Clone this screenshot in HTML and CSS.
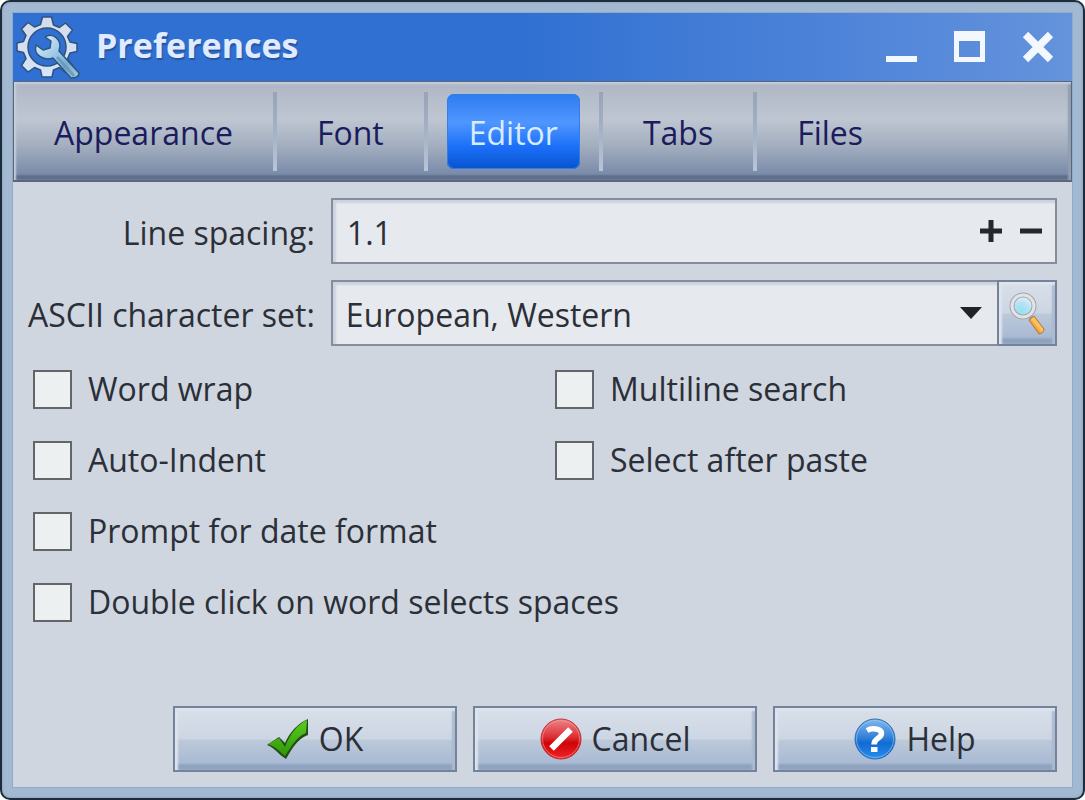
FILE: index.html
```html
<!DOCTYPE html>
<html lang="en">
<head>
<meta charset="utf-8">
<meta name="viewport" content="width=device-width, initial-scale=1">
<title>Preferences</title>
<link rel="stylesheet" href="styles.css">
</head>
<body>
<main class="window">
  <div class="window-inner">
    <header class="titlebar">
      <svg class="app-icon" viewBox="0 0 64 64" aria-hidden="true">
        <defs>
          <linearGradient id="gearFill" x1="0" y1="0" x2="0" y2="1"><stop offset="0" stop-color="#d3dcea"/><stop offset="1" stop-color="#d5e4f8"/></linearGradient>
          <linearGradient id="wrenchFill" x1="0" y1="0" x2="1" y2="1"><stop offset="0" stop-color="#e4f3fb"/><stop offset=".4" stop-color="#a3cdec"/><stop offset=".7" stop-color="#78acd0"/><stop offset="1" stop-color="#a4cde0"/></linearGradient>
        </defs>
        <path d="M26.500 2h9l2 8 6 2.500 6-4.500 7 7-5 6.500 2.500 5.500 7 1.500v8l-7 1.500-2.500 6 5 6.500-7 7-6-5-6 2.500-1.500 7h-10l-1.500-7-6-2.500-6.500 4.500-6.500-6.500 4.500-7-2.500-6-6.500-1.500v-8l6.500-1.500 2.500-6-4.500-6.500 6.500-6.500 6.500 4.500 6-2.500z" fill="url(#gearFill)" stroke="#2f517f" stroke-width="1.500" stroke-linejoin="round"/>
        <circle cx="31" cy="32" r="19" fill="#3070d2" stroke="#2f517f" stroke-width="1.500"/>
        <path d="M29 22C36 17 47 24 43 36L63 58q0 5-8 5L37 43C29 46 17 41 20 30l7 5 7-2 1-7z" fill="url(#wrenchFill)" stroke="#31557d" stroke-width="1.500" stroke-linejoin="round"/>
        <path d="M41 42l17 19" stroke="#5e92b6" stroke-width="3" opacity=".7"/>
      </svg>
      <h1 class="title">Preferences</h1>
      <div class="window-controls">
        <button class="window-button" type="button" aria-label="Minimize"><svg viewBox="0 0 32 32"><path d="M0 25h31v6H0z" fill="#f3f8ff"/></svg></button>
        <button class="window-button" type="button" aria-label="Maximize"><svg viewBox="0 0 32 32"><path d="M0 0h31v31H0zM5 10v16h21V10z" fill="#f3f8ff" fill-rule="evenodd"/></svg></button>
        <button class="window-button" type="button" aria-label="Close"><svg viewBox="0 0 32 32"><path d="M3.500 3.500l25 25M28.500 3.500l-25 25" stroke="#f3f8ff" stroke-width="7.500"/></svg></button>
      </div>
    </header>
    <nav class="tabs" aria-label="Preference pages">
      <div class="tab"><button class="tab-button" type="button">Appearance</button></div>
      <div class="tab"><button class="tab-button" type="button">Font</button></div>
      <div class="tab"><button class="tab-button tab-button-active" type="button" aria-current="page">Editor</button></div>
      <div class="tab"><button class="tab-button" type="button">Tabs</button></div>
      <div class="tab"><button class="tab-button" type="button">Files</button></div>
    </nav>
    <form class="page">
      <div class="fields">
        <label class="field-label" for="spacing">Line spacing:</label>
        <div class="field">
          <input class="field-input" id="spacing" type="text" value="1.1">
          <div class="stepper">
            <button class="step" type="button" aria-label="Increase"><svg viewBox="0 0 24 24"><path d="M12 1v22M1 12h22" stroke="#23272e" stroke-width="5"/></svg></button>
            <button class="step" type="button" aria-label="Decrease"><svg viewBox="0 0 24 24"><path d="M1 12h22" stroke="#23272e" stroke-width="5"/></svg></button>
          </div>
        </div>
        <label class="field-label" for="charset">ASCII character set:</label>
        <div class="field-group">
          <div class="field field-select">
            <select class="select" id="charset"><option>European, Western</option></select>
            <svg class="arrow" viewBox="0 0 22 12" aria-hidden="true"><path d="M0 0h22L11 12z" fill="#1e2229"/></svg>
          </div>
          <button class="bevel search" type="button" aria-label="Search">
            <svg class="search-icon" viewBox="0 0 40 44">
              <defs>
                <radialGradient id="lens" cx=".4" cy=".75" r=".8"><stop offset="0" stop-color="#8fe4f2"/><stop offset=".5" stop-color="#b9e1f3"/><stop offset="1" stop-color="#f4fbff"/></radialGradient>
                <linearGradient id="handle" x1="0" y1="1" x2="1" y2="0"><stop offset="0" stop-color="#d9781a"/><stop offset=".4" stop-color="#f0a040"/><stop offset=".55" stop-color="#ffc96a"/><stop offset="1" stop-color="#c66e13"/></linearGradient>
              </defs>
              <path d="M22 24l4 5" stroke="#999ea7" stroke-width="4"/>
              <path d="M22 29l5-4 10 13q0 4-5 5z" fill="url(#handle)" stroke="#b8772d"/>
              <circle cx="16" cy="15" r="11" fill="url(#lens)" stroke="#a2a5ac" stroke-width="5"/>
              <circle cx="16" cy="15" r="11" fill="none" stroke="#e1e3e6" stroke-width="3"/>
            </svg>
          </button>
        </div>
      </div>
      <div class="checks">
        <label class="check"><input class="check-box" type="checkbox">Word wrap</label>
        <label class="check"><input class="check-box" type="checkbox">Multiline search</label>
        <label class="check"><input class="check-box" type="checkbox">Auto-Indent</label>
        <label class="check"><input class="check-box" type="checkbox">Select after paste</label>
        <label class="check check-wide"><input class="check-box" type="checkbox">Prompt for date format</label>
        <label class="check check-wide"><input class="check-box" type="checkbox">Double click on word selects spaces</label>
      </div>
      <div class="actions">
        <button class="bevel action" type="button">
          <svg class="action-icon" viewBox="0 0 42 42" aria-hidden="true">
            <defs><linearGradient id="green" x1="0" y1="0" x2="0" y2="1"><stop offset="0" stop-color="#59cc20"/><stop offset="1" stop-color="#30960b"/></linearGradient></defs>
            <path d="M0 27l12-8 6 6C23 14 30 6 41 1v16C30 21 25 31 19 41 11 36 8 30 0 27z" fill="#234e16"/>
            <path d="M1 26l11-6 6 9C23 16 30 7 40 2l-1 13C29 19 24 29 18 38 12 33 9 29 1 26z" fill="url(#green)"/>
          </svg>
          OK
        </button>
        <button class="bevel action" type="button">
          <svg class="action-icon" viewBox="0 0 42 42" aria-hidden="true">
            <defs><linearGradient id="red" x1="0" y1="0" x2="0" y2="1"><stop offset="0" stop-color="#ee8586"/><stop offset=".45" stop-color="#db3035"/><stop offset=".6" stop-color="#cf0207"/><stop offset="1" stop-color="#ee2529"/></linearGradient></defs>
            <circle cx="21" cy="21" r="20" fill="url(#red)" stroke="#c83036"/>
            <circle cx="21" cy="21" r="18.500" fill="none" stroke="#f5a0a0" stroke-width="1" opacity=".6"/>
            <path d="M11.500 30.500l19-19" stroke="#fff" stroke-width="6.500"/>
          </svg>
          Cancel
        </button>
        <button class="bevel action" type="button">
          <svg class="action-icon" viewBox="0 0 42 42" aria-hidden="true">
            <defs><linearGradient id="blue" x1="0" y1="0" x2="0" y2="1"><stop offset="0" stop-color="#83b7ec"/><stop offset=".45" stop-color="#3483d8"/><stop offset=".6" stop-color="#116bd3"/><stop offset="1" stop-color="#298eed"/></linearGradient></defs>
            <circle cx="21" cy="21" r="20" fill="url(#blue)" stroke="#346eb1"/>
            <circle cx="21" cy="21" r="18.500" fill="none" stroke="#9dcbf5" stroke-width="1" opacity=".6"/>
            <path d="M13 12.500c5-3 14.500-2 14.500 3 0 5-7.500 4-7.500 11" fill="none" stroke="#fff" stroke-width="5.500"/>
            <path d="M17 29h6.500v5H17z" fill="#fff"/>
          </svg>
          Help
        </button>
      </div>
    </form>
  </div>
</main>
</body>
</html>
```
FILE: styles.css
```css
* { box-sizing: border-box; }

body {
  margin: 0;
  background: #fff;
  font-family: "Open Sans", "Noto Sans", sans-serif;
  font-size: 32px;
  line-height: 40px;
  color: #2b2f37;
}

button, input, select {
  margin: 0;
  padding: 0;
  border: 0;
  background: none;
  font: inherit;
  color: inherit;
}

svg { display: block; }

.window {
  display: flex;
  min-height: 100vh;
  padding: 10px;
  border: 2px solid #1c2c3c;
  border-radius: 10px;
  background: #a3b9d2;
  box-shadow: inset 0 0 2px 1px #93aac2;
}

.window-inner {
  flex: 1;
  display: flex;
  flex-direction: column;
  border: 1px solid #90abc9;
  background: #cfd6e0;
}

.titlebar {
  display: flex;
  align-items: center;
  height: 68px;
  padding: 0 18px 0 3px;
  background: linear-gradient(90deg, #3070d2 0%, #3070d2 48%, #5085d9 80%, #6593dc 100%);
}

.app-icon { width: 64px; height: 64px; }

.title {
  flex: 1;
  margin: 0 0 0 16px;
  padding-bottom: 4px;
  font-size: 34px;
  line-height: 40px;
  color: #e0ebff;
  text-shadow: 1px 2px 1px #24549c;
}

.window-controls { display: flex; gap: 36px; }
.window-button { width: 32px; height: 32px; }

.tabs {
  display: flex;
  height: 101px;
  padding: 10px 0 9px;
  border: 1px solid #59677d;
  border-bottom-width: 2px;
  background: linear-gradient(#aeb6c5 0%, #bfc6d2 38%, #a3aebf 65%, #7a8ba9 94%, #5e6e8b 96%, #5e6e8b 100%);
  box-shadow: inset 2px 2px 2px #c8cfda, inset -3px 0 2px #919db1;
  color: #1b1c5c;
}

.tab {
  display: flex;
  align-items: center;
  padding: 0 18px;
  border: solid;
  border-width: 0 4px 0 0;
  border-image: linear-gradient(#98a3b5, #a5b2c6 50%, #b9c5d6) 1;
}

.tab:last-child { border: 0; }

.tab-button {
  height: 75px;
  padding: 2px 22px 0;
  border-radius: 7px;
}

.tab-button-active {
  margin: 0 1px;
  background: linear-gradient(#2d7cf0 0%, #5096ff 38%, #1c70f8 70%, #0753cf 100%);
  box-shadow: inset 0 0 0 1px #327de6;
  color: #d7ecff;
}

.page {
  flex: 1;
  display: flex;
  flex-direction: column;
  padding: 16px 15px 15px;
}

.fields {
  display: grid;
  grid-template-columns: auto 1fr;
  gap: 16px;
  align-items: center;
}

.field-label { padding-top: 3px; text-align: right; white-space: nowrap; }

.field {
  display: flex;
  align-items: center;
  min-width: 0;
  height: 66px;
  border: 2px solid #858d9c;
  background: #e6e9ee;
  box-shadow: inset 3px 3px 2px #cdd2df;
}

.field-input {
  flex: 1;
  min-width: 0;
  height: 44px;
  padding: 3px 14px 0;
}

.stepper { display: flex; gap: 16px; padding-right: 12px; }
.step { width: 24px; height: 24px; }

.field-group { display: flex; min-width: 0; }
.field-select { flex: 1; display: grid; }

.select {
  grid-area: 1 / 1;
  width: 100%;
  height: 60px;
  padding: 3px 48px 0 13px;
  appearance: none;
}

.arrow {
  grid-area: 1 / 1;
  justify-self: end;
  width: 22px;
  height: 12px;
  margin-right: 15px;
  pointer-events: none;
}

.bevel {
  display: flex;
  align-items: center;
  justify-content: center;
  height: 66px;
  border: 2px solid #74839a;
  background: linear-gradient(#d8dfe9 0%, #ccd6e3 50%, #bcc9da 52%, #a9bad3 88%, #8fa3c0 93%, #8fa3c0 100%);
  box-shadow: inset 3px 3px 2px #dde4ee, inset -3px 0 2px #abbacf;
}

.search { width: 60px; margin-left: -2px; }
.search-icon { width: 40px; height: 44px; }

.checks {
  display: grid;
  grid-template-columns: 1fr 1fr;
  gap: 31px 20px;
  padding: 23px 0 31px 5px;
}

.check {
  display: flex;
  align-items: center;
  gap: 16px;
  height: 40px;
}

.check-wide { grid-column: 1 / -1; }

.check-box {
  flex: none;
  width: 39px;
  height: 39px;
  border: 2px solid #62666b;
  background: #edf0f1;
  appearance: none;
}

.check-box:checked { background: #3070d2; }

.actions {
  display: grid;
  grid-template-columns: repeat(3, minmax(0, 284px));
  justify-content: end;
  gap: 16px;
  margin-top: auto;
}

.action { gap: 10px; }
.action-icon { width: 42px; height: 42px; }
```
